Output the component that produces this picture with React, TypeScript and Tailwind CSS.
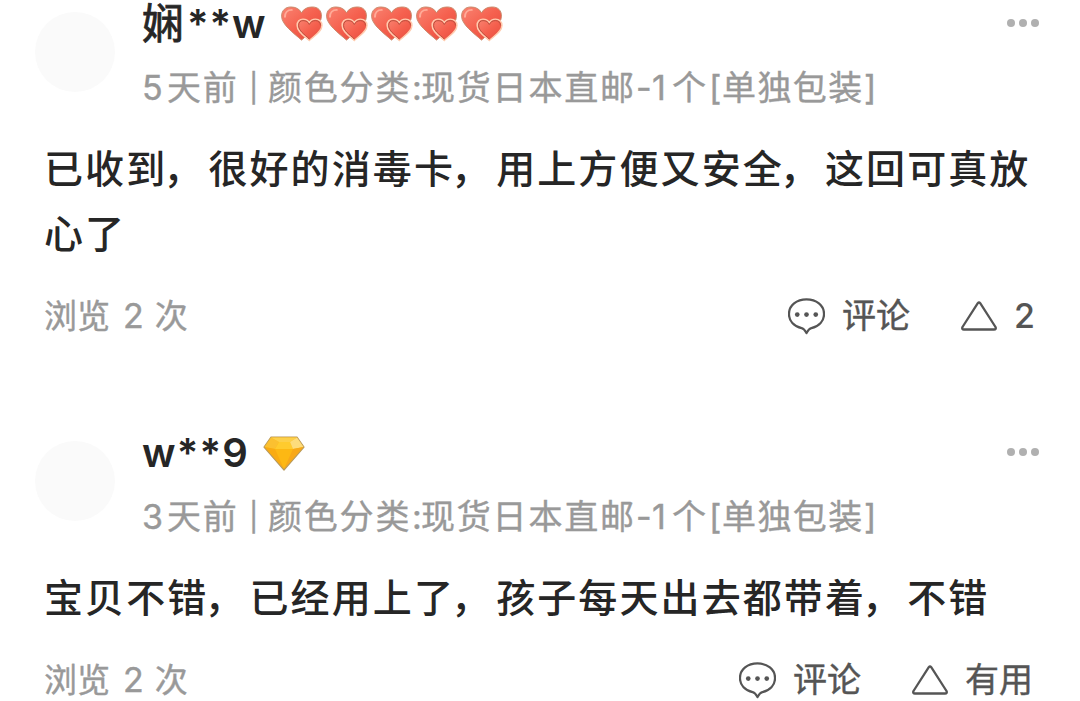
import { Fragment } from "react";
import type { ReactNode } from "react";

type Review = {
  id: number;
  name: ReactNode;
  badge: ReactNode;
  days: string;
  content: string;
  views: number;
  useful: ReactNode;
};

const HeartBadge = () => (
  <svg width="45" height="36" viewBox="0 0 46 37" className="shrink-0">
    <defs>
      <linearGradient id="heart" x1="0" y1="0" x2="1" y2="1">
        <stop offset="0" stopColor="#f98472" />
        <stop offset="0.5" stopColor="#f5604e" />
        <stop offset="1" stopColor="#e54a3c" />
      </linearGradient>
    </defs>
    <path
      d="M22 35C14 28 1.500 19 1.500 10.500C1.500 4.500 5.500 1 11 1C16 1 20 3 22 7C24 3 28 1 33 1C39 1 42.500 4.500 42.500 10.500C42.500 19 30 28 22 35Z"
      fill="url(#heart)"
      stroke="#c98a6c"
      strokeWidth="1"
    />
    <path d="M5 11C5 7 7.500 4 12 4" fill="none" stroke="#ffab98" strokeWidth="2" strokeLinecap="round" />
    <path
      d="M30 35.500C24 30 17.500 26 17.500 20C17.500 16 20 13.500 23.500 13.500C26.500 13.500 29 15 30 17C31 15 33.500 13.500 36.500 13.500C40 13.500 43 16 43 20C43 26 36 30 30 35.500Z"
      fill="url(#heart)"
      stroke="#ffcdb0"
      strokeWidth="1.500"
    />
    <path
      d="M30 34C25 29 19 25.500 19 20C19 17 21 15 23.500 15C26.500 15 29 16.500 30 19C31 16.500 33.500 15 36.500 15C39 15 41.500 17 41.500 20"
      fill="none"
      stroke="#b9503f"
      strokeWidth="1"
    />
  </svg>
);

const DiamondBadge = () => (
  <svg width="42" height="35" viewBox="0 0 42 35" className="shrink-0">
    <path d="M8 1H34L41 11L21 34L1 11Z" fill="#fdb813" stroke="#b99a5c" strokeWidth="1.200" strokeLinejoin="round" />
    <path d="M8 1.500L1.500 11L12 13L16 6Z" fill="#fbc030" />
    <path d="M8 1.500H34L27 6H16Z" fill="#fdd04a" />
    <path d="M16 6H27L30 13H12Z" fill="#ffcb2e" />
    <path d="M34 1.500L40.500 11L30 13L27 6Z" fill="#fddc7c" />
    <path d="M1.500 11L12 13L21 33Z" fill="#f9ab12" />
    <path d="M30 13L40.500 11L21 33Z" fill="#f8a818" />
  </svg>
);

const CommentIcon = () => (
  <svg width="37" height="37" viewBox="0 0 38 38" fill="none" className="shrink-0">
    <path
      d="M19 1.500C29 1.500 37 7.500 37 16.500C37 24 31.500 29.500 24 31C21.500 31.500 20.500 33.500 19 36C17.500 33.500 16.500 31.500 14 31C6.500 29.500 1 24 1 16.500C1 7.500 9 1.500 19 1.500Z"
      stroke="#555"
      strokeWidth="2.300"
      strokeLinejoin="round"
    />
    <g fill="#555">
      <circle cx="9.500" cy="17" r="2.400" />
      <circle cx="19" cy="17" r="2.400" />
      <circle cx="28.500" cy="17" r="2.400" />
    </g>
  </svg>
);

const TriangleIcon = () => (
  <svg width="36" height="30" viewBox="0 0 36 30" fill="none" className="shrink-0">
    <path
      d="M16.800 2.200Q18 0.800 19.200 2.200L34.500 26Q35.500 28.500 33 28.500H3Q0.500 28.500 1.500 26Z"
      stroke="#555"
      strokeWidth="2.300"
      strokeLinejoin="round"
    />
  </svg>
);

const MoreIcon = () => (
  <svg width="34" height="10" viewBox="0 0 34 10" fill="#b0b0b0">
    <circle cx="4" cy="5" r="4" />
    <circle cx="16" cy="5" r="4" />
    <circle cx="28" cy="5" r="4" />
  </svg>
);

const reviews: Review[] = [
  {
    id: 1,
    name: (
      <>
        <span className="w-[47px] text-[42px] [-webkit-text-stroke:0.8px]">娴</span>
        <span className="-ml-[2px] font-semibold tracking-[0.9px]">**w</span>
      </>
    ),
    badge: [1, 2, 3, 4, 5].map((n) => <HeartBadge key={n} />),
    days: "5",
    content: "已收到，很好的消毒卡，用上方便又安全，这回可真放心了",
    views: 2,
    useful: <span className="ml-[17px] text-[34px] font-medium">2</span>,
  },
  {
    id: 2,
    name: <span className="font-semibold tracking-[1.2px]">w**9</span>,
    badge: <DiamondBadge />,
    days: "3",
    content: "宝贝不错，已经用上了，孩子每天出去都带着，不错",
    views: 2,
    useful: <span className="ml-[17px] mr-[2px] text-[34px] [-webkit-text-stroke:0.4px]">有用</span>,
  },
];

const ReviewCard = ({ review }: { review: Review }) => (
  <article className="pl-[44px] pr-[45px]">
    <header className="-ml-[9px] flex h-[118px]">
      <div className="mt-[12px] size-[80px] shrink-0 rounded-full bg-[#fafafa]" />
      <div className="ml-[27px] grow">
        <div className="flex h-[48px] items-center whitespace-nowrap text-[40px] leading-[48px] text-[#262626]">
          <h2 className="flex items-center">{review.name}</h2>
          <div className="ml-[14px] flex">{review.badge}</div>
        </div>
        <p className="mt-[16px] flex h-[48px] items-center whitespace-nowrap text-[34px] leading-[48px] tracking-[1.8px] text-[#999] [-webkit-text-stroke:0.4px]">
          <span className="w-[25px]">{review.days}</span>
          <span className="w-[82px]">天前</span>
          <span className="w-[19px] text-[28px]">|</span>
          <span className="w-[144px]">颜色分类</span>
          <span className="w-[9px] tracking-normal">:</span>
          <span className="w-[215px]">现货日本直邮</span>
          <span className="w-[16px] tracking-normal">-</span>
          <span className="w-[20px]">1</span>
          <span className="w-[37px]">个</span>
          <span className="w-[13px]">[</span>
          <span className="w-[142px] tracking-[1.4px]">单独包装</span>
          <span>]</span>
        </p>
      </div>
      <button className="-mr-[6px] mt-[18px] h-[10px]" aria-label="更多">
        <MoreIcon />
      </button>
    </header>
    <p className="-mr-[21px] mt-[18px] text-[39px] font-medium leading-[65px] tracking-[2.1px] text-[#262626]">
      {review.content.split("，").map((part, i) => (
        <Fragment key={i}>
          {i > 0 && <span className="-ml-[4px] mr-[4px]">，</span>}
          {part}
        </Fragment>
      ))}
    </p>
    <footer className="mt-[26px] flex h-[48px] items-center whitespace-nowrap text-[33px] leading-[48px] text-[#555]">
      <div className="grow text-[#999] [-webkit-text-stroke:0.4px]">
        浏览<span className="ml-[13px] mr-[11px] text-[34px]">{review.views}</span>次
      </div>
      <CommentIcon />
      <span className="ml-[17px] text-[34px] [-webkit-text-stroke:0.4px]">评论</span>
      <span className="ml-[51px]">
        <TriangleIcon />
      </span>
      {review.useful}
    </footer>
  </article>
);

export default function App() {
  return (
    <main className="flex h-[701px] w-[1080px] flex-col gap-[89px] overflow-hidden bg-white font-['Inter','Noto_Sans_CJK_SC',sans-serif]">
      {reviews.map((review) => (
        <ReviewCard key={review.id} review={review} />
      ))}
    </main>
  );
}
